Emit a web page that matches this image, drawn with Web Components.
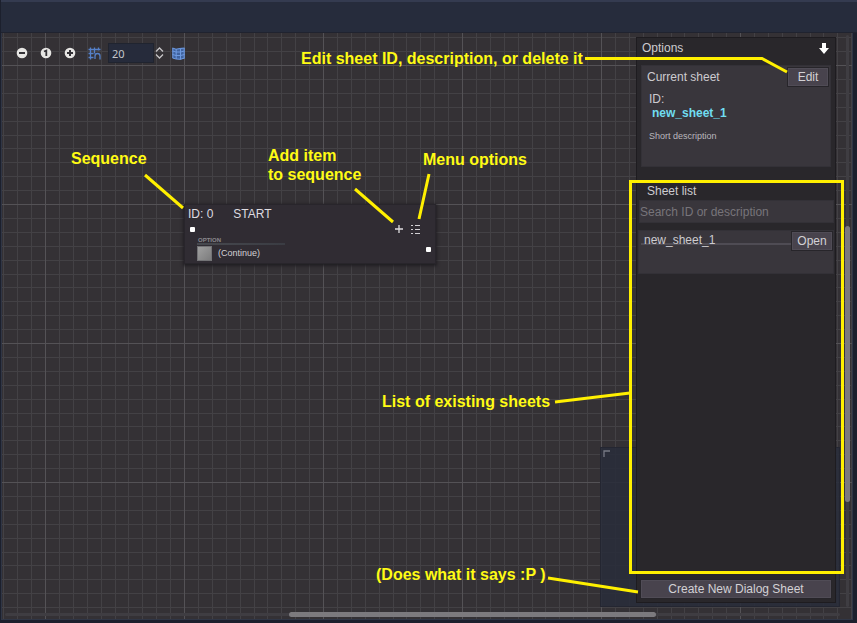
<!DOCTYPE html>
<html lang="en">
<head>
<meta charset="utf-8">
<title>Dialog sheet editor</title>
<style>
html, body { margin: 0; height: 100%; }
body { background: #1c202d; color: #cdcbcf; font: 12px/14px "Liberation Sans", Arial, sans-serif; overflow: hidden; }
</style>
</head>
<body>
<dialog-editor></dialog-editor>
<script>
const define = (name, html, setup) => {
  const template = document.createElement("template");
  template.innerHTML = html;
  customElements.define(name, class extends HTMLElement {
    constructor() {
      super();
      this.attachShadow({ mode: "open" }).append(template.content.cloneNode(true));
    }
    connectedCallback() { if (setup) setup(this, this.shadowRoot); }
  });
};

define("ui-button", `
<style>
:host { display: block; }
button { display: block; box-sizing: border-box; width: 100%; height: 20px; margin: 0; padding: 0 4px; border: 1px solid #27252a;
  background: #48434d; box-shadow: inset 0 0 0 1px #504c56; color: #d3d1d5; font: inherit; line-height: 16px; white-space: nowrap; }
</style>
<button type="button"><slot></slot></button>`);

define("icon-button", `
<style>
:host { display: block; flex: none; }
button { display: block; margin: 0; padding: 0; border: 0; background: none; color: inherit; }
</style>
<button type="button"><slot></slot></button>`,
(host, root) => root.querySelector("button").setAttribute("aria-label", host.getAttribute("label")));

define("spin-box", `
<style>
:host { display: flex; align-items: center; gap: 1px; }
input { box-sizing: border-box; width: 46px; height: 20px; margin: 0; padding: 0 3px; border: 1px solid #20242f; background: #262b3b;
  color: #c4c6cb; font: 11px/16px "Noto Sans", sans-serif; }
.steps { display: grid; gap: 2px; }
button { display: block; padding: 0; border: 0; background: none; }
svg { display: block; fill: none; stroke: #c8c6c9; stroke-width: 1.3; }
</style>
<input type="text" inputmode="numeric" value="20" aria-label="Snap distance">
<div class="steps">
<button type="button" aria-label="Increase"><svg width="9" height="5"><path d="M1 4.5 4.500 1 8 4.500"/></svg></button>
<button type="button" aria-label="Decrease"><svg width="9" height="5"><path d="M1 .5 4.500 4 8 .5"/></svg></button>
</div>`);

define("graph-toolbar", `
<style>
:host { display: flex; align-items: center; height: 20px; color: #e6e5e3; }
.zoom { display: flex; gap: 12px; margin-right: 12px; }
spin-box { margin: 0 8px 0 7px; }
svg { display: block; }
</style>
<div class="zoom">
<icon-button label="Zoom out"><svg width="12" height="12"><circle cx="6" cy="6" r="5.300" fill="#e6e5e3"/><path d="M3 6h6" stroke="#333136" stroke-width="2"/></svg></icon-button>
<icon-button label="Reset zoom"><svg width="12" height="12"><circle cx="6" cy="6" r="5.300" fill="#e6e5e3"/><path d="M4 4.500 6.300 3.500V9" fill="none" stroke="#333136" stroke-width="1.800"/></svg></icon-button>
<icon-button label="Zoom in"><svg width="12" height="12"><circle cx="6" cy="6" r="5.300" fill="#e6e5e3"/><path d="M3 6h6M6 3v6" stroke="#333136" stroke-width="2"/></svg></icon-button>
</div>
<icon-button label="Snap to grid"><svg width="13" height="13" fill="none" stroke="#5580c8" stroke-width="1.300"><path d="M.5 2.500h12M.5 6.500h5M.5 10.500h5M2.500 .5v12M6.500 .5v6M10.500 .5v3M7 12V9a2.500 2.500 0 0 1 5 0v3.500"/></svg></icon-button>
<spin-box></spin-box>
<icon-button label="Toggle minimap"><svg width="13" height="13"><path d="M.5 1 4 2.200 8.500 .8 12.500 1V11.500L8.500 12.500 4 12 .5 11Z" fill="#40639f"/><path d="M.5 1 4 2.200 8.500 1.500 12.500 1M.5 4 4 5 8.500 5 12.500 4M.5 7.500 4 8.500 8.500 8.500 12.500 7.500M.5 11 4 12 8.500 12.300 12.500 11M.8 1v10M4.200 2v10M8.500 1.500v11M12.200 1v10.500" fill="none" stroke="#6e9ae0" stroke-width="1"/></svg></icon-button>`);

define("sequence-node", `
<style>
:host { display: block; box-sizing: border-box; width: 252px; height: 60px; padding: 2px 3px 0; background: #302c33; border: 1px solid #28252b; box-shadow: 0 1px 3px 1px #201e22; color: #dedce0; }
header { display: flex; gap: 20px; line-height: 14px; }
.actions { display: flex; align-items: center; height: 16px; }
.port { width: 5px; height: 5px; border-radius: 1px; background: #fff; }
.actions .port { margin-left: 2px; }
.buttons { display: flex; gap: 7px; margin: 0 11px 0 auto; }
.option { display: flex; align-items: flex-start; }
.body { flex: 1; margin-left: 9px; }
.tag { display: block; font: bold 6px/6px "Liberation Sans", sans-serif; color: #8a888d; padding-left: 1px; }
.rule { height: 2px; width: 88px; background: linear-gradient(90deg, #47494f, #3a3c43); }
.text { display: flex; align-items: center; gap: 6px; font-size: 9px; line-height: 16px; color: #d2d0d4; }
.cube { width: 15px; height: 15px; box-sizing: border-box; border: 1px solid #737376; background: linear-gradient(135deg, #a0a0a0, #7c7c7d); }
.option .port { margin: 10px 1px 0 0; }
svg { display: block; }
</style>
<header><span>ID: 0</span><span>START</span></header>
<div class="actions"><span class="port"></span>
<div class="buttons">
<icon-button label="Add item"><svg width="10" height="10"><path d="M1 5h8M5 1v8" stroke="#dfdde1" stroke-width="1.300"/></svg></icon-button>
<icon-button label="Menu options"><svg width="10" height="10" stroke="#d2d0d4" stroke-width="1"><path d="M0 1.500h2M4 1.500h5M0 5.500h2M4 5.500h5M0 9.500h2M4 9.500h5"/></svg></icon-button>
</div></div>
<div class="option"><div class="body"><span class="tag">OPTION</span><div class="rule"></div>
<div class="text"><span class="cube"></span><span>(Continue)</span></div></div><span class="port"></span></div>`);

define("current-sheet", `
<style>
:host { display: block; box-sizing: border-box; height: 102px; margin: 0 4px; padding: 1px 1px 0 5px; border: 1px solid #333137; background: #39363c; }
header { display: flex; align-items: center; justify-content: space-between; }
ui-button { width: 42px; }
dl { margin: 5px 0 0 2px; }
dd { margin: 0 0 0 3px; font-weight: bold; color: #70ddf0; }
p { margin: 10px 0 0 2px; font-size: 9px; line-height: 12px; color: #bab8bc; }
</style>
<header><span>Current sheet</span><ui-button>Edit</ui-button></header>
<dl><dt>ID:</dt><dd>new_sheet_1</dd></dl>
<p>Short description</p>`);

define("sheet-item", `
<style>
:host { display: flex; align-items: flex-start; }
.name { flex: 1; padding: 2px 0 0 3px; line-height: 14px; background: linear-gradient(#4f4c54, #4f4c54) 0 12px / 100% 2px no-repeat; height: 16px; }
ui-button { width: 42px; }
</style>
<span class="name"><slot></slot></span><ui-button>Open</ui-button>`);

define("sheet-list", `
<style>
:host { display: flex; flex-direction: column; flex: 1; margin: 0 1px; }
label { padding-left: 9px; line-height: 14px; }
input { box-sizing: border-box; width: auto; height: 23px; margin: 2px 0 7px 1px; padding: 0; border: 1px solid #333137; background: #39363c; color: #cdcbcf; font: inherit; }
input::placeholder { color: #77747a; opacity: 1; }
.items { box-sizing: border-box; height: 44px; padding: 0 0 0 2px; border: 1px solid #333137; background: #39363c; }
</style>
<label for="search">Sheet list</label>
<input id="search" type="text" placeholder="Search ID or description">
<div class="items"><sheet-item>new_sheet_1</sheet-item></div>`);

define("options-dock", `
<style>
:host { display: flex; flex-direction: column; box-sizing: border-box; width: 200px; border: 1px solid #1e1c20; background: #29272b; }
header { display: flex; justify-content: space-between; align-items: center; height: 20px; padding: 0 6px 0 5px; margin-bottom: 7px; }
sheet-list { margin-top: 17px; }
ui-button { margin: 0 3px 3px; }
svg { display: block; }
</style>
<header><span>Options</span><icon-button label="Dock options"><svg width="10" height="12"><path d="M3 1h4v5h3L5 12 0 6h3Z" fill="#fff"/></svg></icon-button></header>
<current-sheet></current-sheet>
<sheet-list></sheet-list>
<ui-button>Create New Dialog Sheet</ui-button>`);

define("scroll-track", `
<style>
:host { display: grid; }
.track { background: #3f3d42; border-radius: 2px; display: grid; }
.thumb { background: #7c7a7e; border-radius: 3px; }
:host([vertical]) .track { width: 3px; margin: 2px auto 0; grid-template-rows: 191fr 275fr 105fr; }
:host([vertical]) .thumb { grid-row: 2; width: 5px; margin-left: -1px; }
:host(:not([vertical])) .track { height: 3px; margin: auto 0; grid-template-columns: 284fr 367fr 184fr; }
:host(:not([vertical])) .thumb { grid-column: 2; height: 5px; margin-top: -1px; }
</style>
<div class="track"><div class="thumb"></div></div>`);

define("grid-lines", `
<style>
:host { position: absolute; inset: 0; }
svg { display: block; width: 100%; height: 100%; }
</style>
<svg aria-hidden="true"><defs>
<pattern id="cells" x="43" y="32" width="139" height="139" patternUnits="userSpaceOnUse">
<path d="M14.500 0v139M28.500 0v139M42.500 0v139M56.500 0v139M70.500 0v139M83.500 0v139M97.500 0v139M111.500 0v139M125.500 0v139M0 14.500h139M0 28.500h139M0 42.500h139M0 56.500h139M0 70.500h139M0 83.500h139M0 97.500h139M0 111.500h139M0 125.500h139" stroke="#434145"/>
<path d="M.5 0v139M0 .5h139" stroke="#545256"/>
</pattern></defs><rect width="100%" height="100%" fill="url(#cells)"/></svg>`);

define("mini-map", `
<style>
:host { display: block; box-sizing: border-box; width: 240px; height: 160px; padding: 2px; border: 1px solid #242631; background: rgba(41, 44, 58, .88); }
svg { display: block; }
</style>
<svg width="8" height="8"><path d="M1 7V1h6" fill="none" stroke="#777984" stroke-width="1.300"/></svg>`);

define("graph-canvas", `
<style>
:host { position: relative; display: grid; grid-template: minmax(0, 1fr) 12px / minmax(0, 1fr) 12px; background: #343135; overflow: hidden; }
.view { position: relative; display: flex; justify-content: space-between; align-items: stretch; padding: 4px 4px 4px 14px; }
graph-toolbar { margin-top: 6px; align-self: flex-start; }
options-dock { position: relative; }
scroll-track { position: relative; }
scroll-track[vertical] { margin-left: 2px; }
scroll-track:not([vertical]) { margin: 3px 0 0 3px; }
sequence-node { position: absolute; left: 182px; top: 171px; }
mini-map { position: absolute; right: 0; bottom: 0; }
</style>
<grid-lines></grid-lines>
<div class="view">
<graph-toolbar></graph-toolbar>
<sequence-node></sequence-node>
<mini-map></mini-map>
<options-dock></options-dock>
</div>
<scroll-track vertical></scroll-track>
<scroll-track></scroll-track>`);

define("call-out", `<style>
:host { position: absolute; color: #fffb14; font: bold 16px/19px "Liberation Sans", Arial, sans-serif; white-space: nowrap; }
</style><slot></slot>`);

define("help-overlay", `
<style>
:host { position: absolute; inset: 0; pointer-events: none; }
svg { display: block; width: 100%; height: 100%; }
</style>
<svg aria-hidden="true" fill="none" stroke="#fff000" stroke-width="3">
<path d="M585 58.500H762L787 72M145 175 183 208M355 189 393 222M429 174 419 219M555 402 630 393M548 578 638 592"/>
<rect x="630.500" y="181.500" width="212" height="391"/></svg>
<call-out style="left:301px;top:49px">Edit sheet ID, description, or delete it</call-out>
<call-out style="left:71px;top:149px">Sequence</call-out>
<call-out style="left:268px;top:146px">Add item<br>to sequence</call-out>
<call-out style="left:423px;top:150px">Menu options</call-out>
<call-out style="left:382px;top:392px">List of existing sheets</call-out>
<call-out style="left:376px;top:565px">(Does what it says :P )</call-out>`);

define("dialog-editor", `
<style>
:host { position: relative; display: flex; flex-direction: column; box-sizing: border-box; height: 100vh; padding: 0 4px 3px 1px; background: #1c202d; }
.bar { flex: none; box-sizing: border-box; height: 33px; background: #262c3c; border-top: 2px solid #343b50; border-bottom: 1px solid #20232f; margin-right: -4px; }
graph-canvas { flex: 1; border: 1px solid #303646; border-top: 0; }
</style>
<div class="bar"></div>
<graph-canvas></graph-canvas>
<help-overlay></help-overlay>`);
</script>
</body>
</html>
